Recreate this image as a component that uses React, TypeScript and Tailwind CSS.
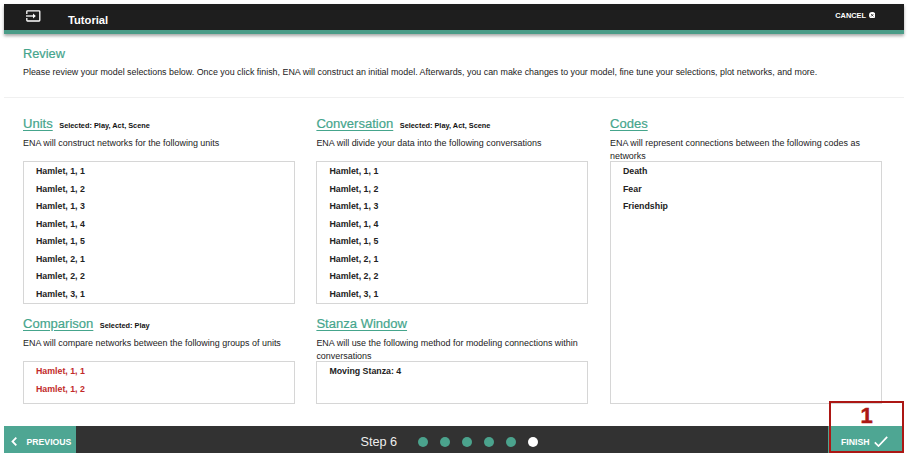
import type { ReactNode } from "react";

const scenes = ["1, 1", "1, 2", "1, 3", "1, 4", "1, 5", "2, 1", "2, 2", "3, 1"];
const hamlet = scenes.map((s) => `Hamlet, ${s}`);

type SectionProps = {
  title: string;
  selected?: string;
  text: ReactNode;
  rows: string[];
  box: string;
  rowColor?: string;
};

function Section({ title, selected, text, rows, box, rowColor = "text-[#222]" }: SectionProps) {
  return (
    <section>
      <div className="flex h-4 items-baseline whitespace-nowrap leading-4">
        <h2 className="text-[13.05px] text-[#45a58c] underline decoration-1 underline-offset-2 [-webkit-text-stroke:0.2px_#45a58c]">
          {title}
        </h2>
        {selected && <span className="ml-[6.5px] text-[7.35px] font-bold text-[#111]">Selected: {selected}</span>}
      </div>
      <p className="mt-[5px] h-6 whitespace-nowrap text-[8.95px] leading-[12.7px] text-[#222]">{text}</p>
      <ul className={`overflow-hidden border border-[#d6d6d6] pt-px ${box}`}>
        {rows.map((row) => (
          <li key={row} className={`h-[17.57px] pl-3 text-[8.8px] font-bold leading-[17.57px] ${rowColor}`}>
            {row}
          </li>
        ))}
      </ul>
    </section>
  );
}

export default function App() {
  return (
    <div className="h-[457px] w-[908px] overflow-hidden bg-white p-1 font-['Liberation_Sans',Arial,sans-serif]">
      <div className="relative flex h-[449px] w-[900px] flex-col">
        <header className="flex h-[30px] shrink-0 border-b-4 border-[#4b9c88] bg-[#1e1e1e] text-white shadow-[0_2px_3px_rgba(0,0,0,0.35)]">
          <svg className="ml-[22px] mt-1.5 h-3 w-[15px]" viewBox="0 0 15 12" fill="none" stroke="#fff" strokeWidth="1.3">
            <path d="M.8 4V1.5Q.8.8 1.5.8H13.1Q13.8.8 13.8 1.5V10.3Q13.8 11 13.1 11H1.5Q.8 11 .8 10.3V8" />
            <path d="M0 6H8.5" />
            <path d="M7 3.6L9.8 6L7 8.4Z" fill="#fff" stroke="none" />
          </svg>
          <h1 className="ml-[27px] mt-2 text-[11.2px] font-bold leading-4">Tutorial</h1>
          <div className="ml-auto mr-[29px] mt-[6px] flex h-3 items-center text-[7.4px] font-bold leading-3">
            CANCEL
            <svg className="mb-0.5 ml-[2.5px] h-[6.5px] w-[6.5px]" viewBox="0 0 6 6">
              <circle cx="3" cy="3" r="3" fill="#fff" />
              <path d="M1.9 1.9L4.1 4.1M4.1 1.9L1.9 4.1" stroke="#1e1e1e" strokeWidth=".7" />
            </svg>
          </div>
        </header>

        <div className="h-[64px] shrink-0 border-b border-[#f0f0f0] pl-[19px] pt-[12px]">
          <h2 className="text-[12.8px] leading-4 text-[#45a58c] [-webkit-text-stroke:0.2px_#45a58c]">Review</h2>
          <p className="mt-[4px] whitespace-nowrap text-[8.9px] leading-[13px] text-[#222]">
            Please review your model selections below. Once you click finish, ENA will construct an initial model.
            Afterwards, you can make changes to your model, fine tune your selections, plot networks, and more.
          </p>
        </div>

        <main className="grid h-[328px] shrink-0 grid-cols-[293.4px_293.6px_272px] pl-[19px] pt-[18px]">
          <div className="flex w-[272px] flex-col gap-[12px]">
            <Section
              title="Units"
              selected="Play, Act, Scene"
              text="ENA will construct networks for the following units"
              rows={hamlet}
              box="h-[143px]"
            />
            <Section
              title="Comparison"
              selected="Play"
              text="ENA will compare networks between the following groups of units"
              rows={hamlet.slice(0, 2)}
              box="h-[43px]"
              rowColor="text-[#c22a2a]"
            />
          </div>
          <div className="flex w-[272px] flex-col gap-[12px]">
            <Section
              title="Conversation"
              selected="Play, Act, Scene"
              text="ENA will divide your data into the following conversations"
              rows={hamlet}
              box="h-[143px]"
            />
            <Section
              title="Stanza Window"
              text={<>ENA will use the following method for modeling connections within<br />conversations</>}
              rows={["Moving Stanza: 4"]}
              box="h-[43px]"
            />
          </div>
          <Section
            title="Codes"
            text={<>ENA will represent connections between the following codes as<br />networks</>}
            rows={["Death", "Fear", "Friendship"]}
            box="h-[243px]"
          />
        </main>

        <footer className="flex h-[27px] shrink-0 items-stretch bg-[#323232] text-white">
          <div className="flex w-[72px] items-center bg-[#4ea693] pl-[7px] pt-1">
            <svg className="h-[9px] w-[7px]" viewBox="0 0 7 9" fill="none" stroke="#fff" strokeWidth="1.8">
              <path d="M5.3.7L1.5 4.5L5.3 8.3" />
            </svg>
            <span className="ml-[8.5px] text-[8.7px] font-bold leading-3">PREVIOUS</span>
          </div>
          <div className="ml-[284.5px] flex items-center pt-[5px]">
            <span className="w-[57.5px] text-[12.7px] leading-4 text-[#eee]">Step 6</span>
            <div className="flex gap-3">
              {[1, 2, 3, 4, 5, 6].map((n) => (
                <span key={n} className={`h-2.5 w-2.5 rounded-full ${n === 6 ? "bg-white" : "bg-[#4ba38d]"}`} />
              ))}
            </div>
          </div>
          <div className="ml-auto flex w-[76px] items-center bg-[#4ea693] pl-[13px] pt-1">
            <span className="text-[8.7px] font-bold leading-3">FINISH</span>
            <svg className="ml-[5px] h-[11px] w-[14px]" viewBox="0 0 14 11" fill="none" stroke="#fff" strokeWidth="1.7">
              <path d="M.8 6.3L4.5 10L13.2.8" />
            </svg>
          </div>
        </footer>

        {/* Callout marker laid over the Finish button */}
        <div className="absolute bottom-0 right-0 h-[52px] w-[75px] border-2 border-[#ac1714] text-center">
          <span className="block text-[22px] font-bold leading-[26px] text-[#ac1714] [-webkit-text-stroke:0.5px_#ac1714]">1</span>
        </div>
      </div>
    </div>
  );
}
